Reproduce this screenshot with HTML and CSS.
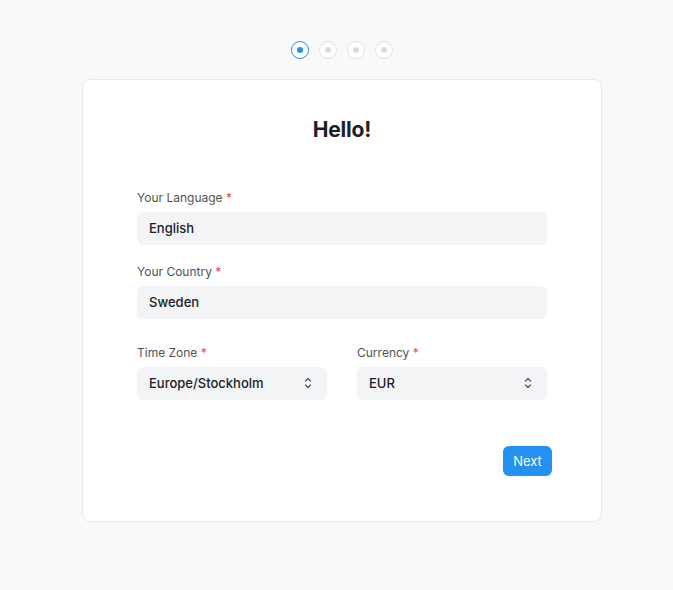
FILE: index.html
```html
<!DOCTYPE html>
<html>
<head>
<meta charset="utf-8">
<link rel="stylesheet" href="styles.css">
</head>
<body>
<div class="page">
  <div class="steps">
    <span class="step active"><span class="dot"></span></span>
    <span class="step"><span class="dot"></span></span>
    <span class="step"><span class="dot"></span></span>
    <span class="step"><span class="dot"></span></span>
  </div>
  <div class="card">
    <h1 class="title">Hello!</h1>
    <div class="form">
      <div class="field">
        <label class="label">Your Language <span class="req">*</span></label>
        <div class="input">English</div>
      </div>
      <div class="field">
        <label class="label">Your Country <span class="req">*</span></label>
        <div class="input">Sweden</div>
      </div>
      <div class="row">
        <div class="field">
          <label class="label">Time Zone <span class="req">*</span></label>
          <div class="input select">Europe/Stockholm
            <svg class="chev" width="10" height="14" viewBox="0 0 10 14"><path d="M2.5 5 L5 2.5 L7.5 5 M2.5 9 L5 11.5 L7.5 9" fill="none" stroke="#4b5563" stroke-width="1.2" stroke-linecap="round" stroke-linejoin="round"/></svg>
          </div>
        </div>
        <div class="field">
          <label class="label">Currency <span class="req">*</span></label>
          <div class="input select">EUR
            <svg class="chev" width="10" height="14" viewBox="0 0 10 14"><path d="M2.5 5 L5 2.5 L7.5 5 M2.5 9 L5 11.5 L7.5 9" fill="none" stroke="#4b5563" stroke-width="1.2" stroke-linecap="round" stroke-linejoin="round"/></svg>
          </div>
        </div>
      </div>
    </div>
    <div class="actions">
      <button class="btn">Next</button>
    </div>
  </div>
</div>
</body>
</html>
```
FILE: styles.css
```css
* { box-sizing: border-box; }
html, body { margin: 0; padding: 0; }
body {
  background: #f9f9f9;
  font-family: Inter, "Noto Sans", sans-serif;
  color: #1f272e;
  width: 673px;
  height: 590px;
}
.page {
  display: flex;
  flex-direction: column;
  align-items: center;
  padding-top: 41px;
  padding-left: 11px;
}
.steps {
  display: flex;
  gap: 10px;
}
.step {
  width: 18px;
  height: 18px;
  border-radius: 50%;
  border: 1px solid #e2e2e2;
  background: #fff;
  display: flex;
  align-items: center;
  justify-content: center;
}
.step .dot {
  width: 6px;
  height: 6px;
  border-radius: 50%;
  background: #dcdcdc;
}
.step.active { border-color: #2490ef; }
.step.active .dot { background: #2490ef; }
.card {
  margin-top: 20px;
  width: 520px;
  height: 443px;
  background: #fff;
  border: 1px solid #e8e8e8;
  border-radius: 8px;
  padding: 38px 49px 0 54px;
}
.title {
  margin: 0 -49px 0 -54px;
  font-size: 21px;
  font-weight: 700;
  line-height: 24px;
  text-align: center;
  color: #1a2028;
  letter-spacing: -0.2px;
}
.form {
  margin-top: 48px;
  width: 410px;
  display: flex;
  flex-direction: column;
  gap: 19px;
}
.field {
  display: flex;
  flex-direction: column;
  gap: 6px;
}
.row {
  display: flex;
  gap: 30px;
  margin-top: 7px;
}
.row .field { width: 190px; }
.label {
  font-size: 12px;
  line-height: 16px;
  color: #525252;
}
.req { color: #e24c4c; }
.input {
  height: 33px;
  background: #f3f4f6;
  border-radius: 6px;
  padding: 0 12px 1px;
  display: flex;
  align-items: center;
  font-size: 13px;
  font-weight: 500;
  color: #1a2028;
}
.select { justify-content: space-between; }
.chev { margin-right: 2px; }
.actions {
  display: flex;
  justify-content: flex-end;
  margin-top: 46px;
}
.btn {
  height: 30px;
  width: 49px;
  border: none;
  border-radius: 6px;
  background: #2490ef;
  color: #fff;
  font-family: Inter, "Noto Sans", sans-serif;
  font-size: 13px;
  padding: 0;
}
```
